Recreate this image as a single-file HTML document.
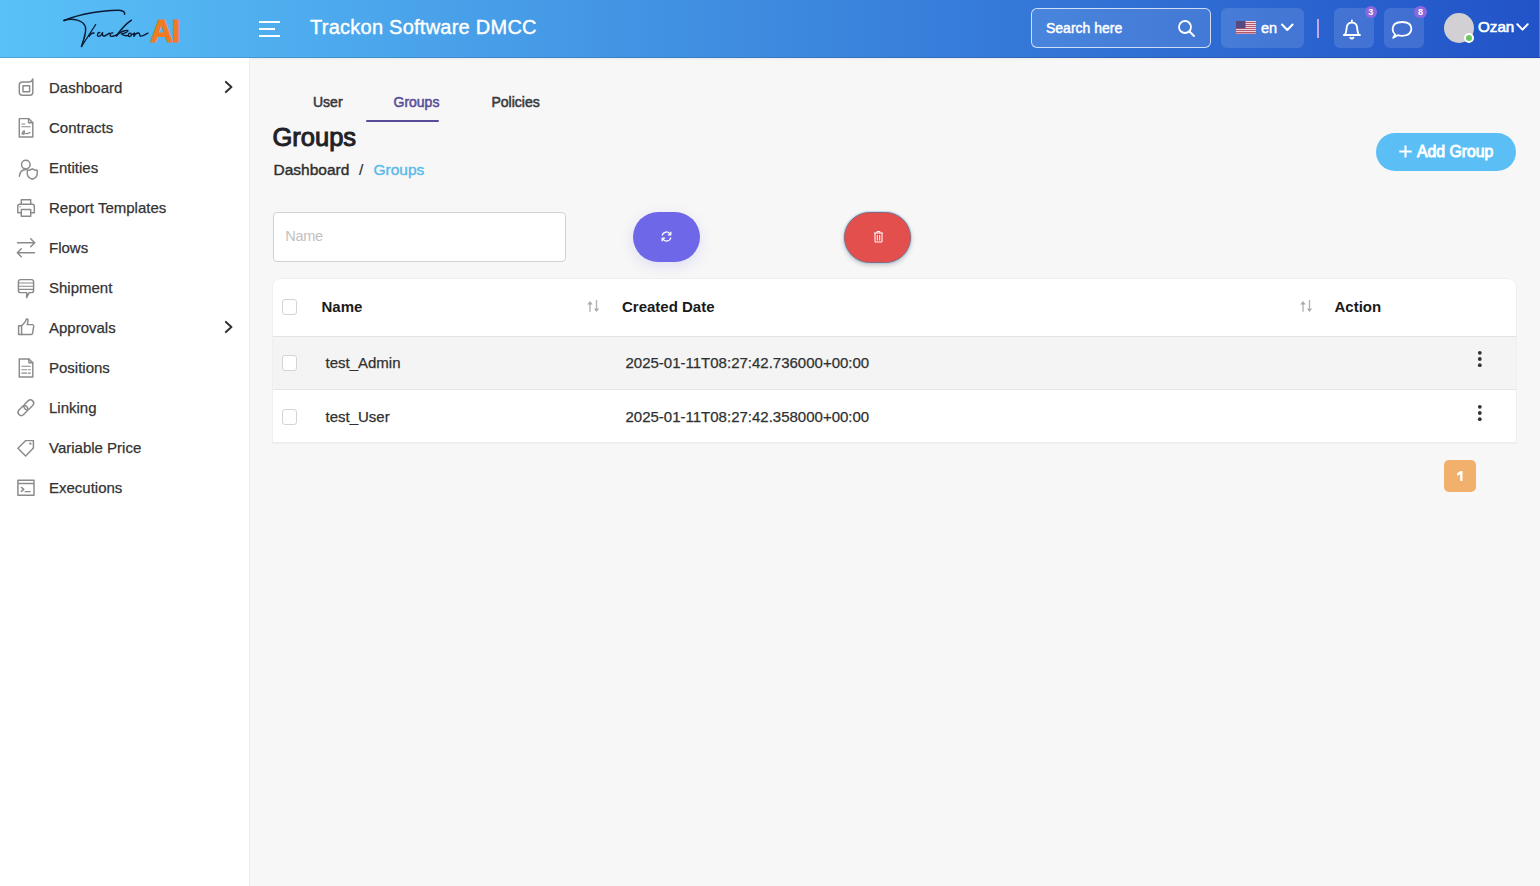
<!DOCTYPE html>
<html><head><meta charset="utf-8">
<style>
*{box-sizing:border-box;margin:0;padding:0}
html,body{width:1540px;height:886px;overflow:hidden}
body{background:#f7f7f7;font-family:"Liberation Sans",sans-serif;position:relative;color:#333}
.abs{position:absolute}
#hdr{left:0;top:0;width:1540px;height:58px;background:linear-gradient(90deg,#59c1f7 0%,#2253c8 100%);box-shadow:inset 0 -1px 0 rgba(0,0,0,.13), 0 1px 2px rgba(0,0,0,.06)}
#side{left:0;top:58px;width:250px;height:828px;background:#fff;border-right:1px solid #ededed}
.nav{position:absolute;left:0;width:249px;height:40px}
.nav .t{position:absolute;left:49px;top:0;font-size:15px;color:#333;line-height:40px;white-space:nowrap;-webkit-text-stroke:0.25px #333}
.nav svg.ic{position:absolute;left:17px;top:11px}
.nav svg.chev{position:absolute;left:222px;top:13px}
.txt{position:absolute;white-space:nowrap;line-height:1}
.cb{width:15.5px;height:15.5px;border:1px solid #d4d4d4;border-radius:3px;background:#fff}
.th{font-size:15px;font-weight:bold;color:#1a1a1a}
.td{font-size:15px;color:#303030;-webkit-text-stroke:0.25px #303030}
.badge{width:12.2px;height:12.2px;border-radius:50%;background:#8c68de;color:#fff;font-size:9px;font-weight:bold;line-height:12.2px;text-align:center}
</style></head>
<body>
<div id="hdr" class="abs">
  <!-- logo -->
  <svg class="abs" style="left:0;top:0" width="200" height="58" viewBox="0 0 200 58" fill="none" stroke="#0a1a33" stroke-linecap="round" stroke-linejoin="round">
    <path d="M64 20.5 C 80 14, 104 10, 119 10.3 C 123.5 10.6, 125 12.2, 124.6 14.3" stroke-width="1.5"/>
    <path d="M64 20.5 C 72 17.5, 84.5 20, 85.6 28 C 86.2 33, 84 39, 81.5 46.5" stroke-width="1.5"/>
    <path d="M81.5 46.5 L 95.7 24.5" stroke-width="1.3"/>
    <path d="M89 36.4 Q 91 32.6 94 33 M99.8 32.6 C 97.5 32.3, 96.4 36.4, 98.8 36.4 C 100.8 36.4, 102.2 33.4, 102.6 32.6 C 102.2 34.5, 102.4 36.4, 104.5 36 C 106 35.6, 107.5 34.2, 109.6 33.2 M112.8 32.9 C 110.5 32.4, 108.6 36.4, 111.5 36.4 C 113.2 36.4, 114.6 35.6, 116.6 35" stroke-width="1.4"/>
    <path d="M131.4 20.2 C 126 24, 119.5 31.5, 116.4 36" stroke-width="1.5"/>
    <path d="M117.2 34.8 C 120.5 31.5, 127.8 29.4, 128 30.8 C 127.6 32.4, 123 33.8, 121.4 34 C 123 35, 125.2 36.2, 127.6 35.6 M130.2 33.1 C 128.2 32.9, 127.4 36.5, 129.6 36.5 C 131.6 36.5, 132.2 33.4, 130.2 33.1 M131.8 34.6 C 133.2 34.2, 133.8 33.6, 134.4 33 L 133.8 36.4 C 135 34.2, 137.4 32.8, 139 33.2 C 140 33.6, 139.4 35.6, 140.2 36.1 C 142 36.5, 145 34.4, 148 33.2" stroke-width="1.4"/>
    <text x="150" y="42" font-family="Liberation Sans" font-weight="bold" font-size="32" fill="#f07b22" stroke="#f07b22" stroke-width="0.9" letter-spacing="-1.6">AI</text>
  </svg>
  <!-- hamburger -->
  <div class="abs" style="left:259px;top:21px;width:21px;height:2px;background:#fff"></div>
  <div class="abs" style="left:259px;top:28px;width:16px;height:2px;background:#fff"></div>
  <div class="abs" style="left:259px;top:35px;width:21px;height:2px;background:#fff"></div>
  <div class="txt" style="left:310px;top:17px;font-size:20px;letter-spacing:0.25px;color:#fff;-webkit-text-stroke:0.4px #fff">Trackon Software DMCC</div>
  <!-- search -->
  <div class="abs" style="left:1031px;top:8px;width:180px;height:40px;border:1px solid rgba(255,255,255,.75);border-radius:6px;background:rgba(255,255,255,.1)"></div>
  <div class="txt" style="left:1046px;top:21.3px;font-size:14px;color:#fff;-webkit-text-stroke:0.45px #fff">Search here</div>
  <svg class="abs" style="left:1177px;top:19px" width="19" height="19" viewBox="0 0 19 19"><circle cx="8" cy="8" r="6" fill="none" stroke="#fff" stroke-width="1.8"/><path d="M12.5 12.5 L17 17" stroke="#fff" stroke-width="2" stroke-linecap="round"/></svg>
  <!-- lang -->
  <div class="abs" style="left:1221px;top:8px;width:83px;height:40px;border-radius:6px;background:rgba(255,255,255,.12)"></div>
  <!-- divider -->
  <div class="abs" style="left:1317px;top:19px;width:2px;height:19px;background:#c4a6ea"></div>
  <!-- bell / chat boxes -->
  <div class="abs" style="left:1334px;top:8px;width:40px;height:40px;border-radius:6px;background:rgba(255,255,255,.12)"></div>
  <div class="abs" style="left:1384px;top:8px;width:40px;height:40px;border-radius:6px;background:rgba(255,255,255,.12)"></div>
  <!-- avatar -->
  <div class="abs" style="left:1444px;top:13px;width:30px;height:30px;border-radius:50%;background:#d2d0d2"></div>
  <div class="abs" style="left:1464px;top:33px;width:10px;height:10px;border-radius:50%;background:#6cc85a;border:2px solid #fff"></div>
  <div class="txt" style="left:1478px;top:18.6px;font-size:15.2px;color:#fff;-webkit-text-stroke:0.6px #fff">Ozan</div>
  <!-- flag -->
  <svg class="abs" style="left:1236px;top:21px" width="20" height="13" viewBox="0 0 20 13">
    <rect width="20" height="13" fill="#efd2dc"/>
    <g fill="#b25a6e"><rect y="1" width="20" height="1"/><rect y="3" width="20" height="1"/><rect y="5" width="20" height="1"/><rect y="7" width="20" height="1"/><rect y="9" width="20" height="1"/><rect y="11" width="20" height="1"/><rect y="12.5" width="20" height="0.5"/></g>
    <rect width="9.5" height="7.3" fill="#574a80"/>
  </svg>
  <div class="txt" style="left:1261px;top:21px;font-size:14.5px;color:#fff;-webkit-text-stroke:0.45px #fff">en</div>
  <svg class="abs" style="left:1279.6px;top:22px" width="15" height="11" viewBox="0 0 15 11"><path d="M2 2.5 L7.3 8 L12.6 2.5" fill="none" stroke="#fff" stroke-width="2" stroke-linecap="round" stroke-linejoin="round"/></svg>
  <!-- bell -->
  <svg class="abs" style="left:1340px;top:18px" width="24" height="24" viewBox="0 0 24 24" fill="none" stroke="#fff" stroke-width="1.8" stroke-linejoin="round">
    <path d="M11.9 2.3 L11.9 4.3" stroke-linecap="round"/>
    <path d="M5.2 16.4 Q6.4 14 6.7 9.6 Q7.1 4.6 11.9 4.6 Q16.7 4.6 17.1 9.6 Q17.4 14 18.6 16.4"/>
    <path d="M3.9 17 L19.9 17" stroke-width="2.1" stroke-linecap="round"/>
    <path d="M10.3 19.6 Q11.9 21.5 13.5 19.6" stroke-width="1.8" stroke-linecap="round"/>
  </svg>
  <!-- chat -->
  <svg class="abs" style="left:1389px;top:18px" width="26" height="24" viewBox="0 0 26 24" fill="none" stroke="#fff" stroke-width="1.8" stroke-linejoin="round">
    <path d="M6.2 16.6 Q3.5 14.2 3.6 11 Q3.8 4 13.2 4 Q22.4 4.2 22.4 10.8 Q22.2 17.6 13.2 17.8 Q10.6 17.8 8.8 17.2 L4.2 19.8 Z"/>
  </svg>
  <!-- badges -->
  <div class="abs badge" style="left:1364.6px;top:5.9px">3</div>
  <div class="abs badge" style="left:1414.4px;top:5.9px">8</div>
  <div class="abs" style="left:1539px;top:0;width:1px;height:57px;background:rgba(255,255,255,.22)"></div>
  <!-- ozan chevron -->
  <svg class="abs" style="left:1515px;top:21px" width="15" height="12" viewBox="0 0 15 12"><path d="M2.3 3.3 L7.5 8.6 L12.7 3.3" fill="none" stroke="#fff" stroke-width="2" stroke-linecap="round" stroke-linejoin="round"/></svg>
</div>


<div id="side" class="abs"></div>
<svg class="abs" style="left:0;top:0" width="249" height="520" viewBox="0 0 249 520" fill="none" stroke="#8a8a8a" stroke-width="1.45" stroke-linejoin="round" stroke-linecap="round">
  <!-- dashboard -->
  <path d="M32.8 79 L32.8 92.2 Q32.8 95.2 29.8 95.2 L22.3 95.2 Q19.3 95.2 19.3 92.2 L19.3 85 Q19.3 82 22.3 82 L29.5 82 Q32 81.5 32.8 79 Z"/>
  <path d="M23 85.8 L29.6 85.8 L29.6 91.8 L23 91.8 Z"/>
  <!-- contracts -->
  <path d="M19.3 118.6 L28.6 118.6 L32.8 122.8 L32.8 137 L19.3 137 Z"/>
  <path d="M28.6 118.6 L28.6 122.8 L32.8 122.8" />
  <path d="M21.8 124 L24.8 124 M21.8 126.8 L30.2 126.8" stroke-width="1.1"/>
  <path d="M22 134 C23 131, 24.5 130, 24.5 131.5 C24.5 133, 22.5 134, 23.5 134.3 C25 134.3, 25.5 132.5, 26.5 133.5 C27.5 134.3, 28.5 132.2, 30 132.6" stroke-width="1.2"/>
  <!-- entities -->
  <circle cx="25.8" cy="164.6" r="4.3"/>
  <path d="M19.4 176.2 C19.8 171.5, 22.5 169.4, 26.2 169.4"/>
  <path d="M27.3 170.3 Q30 170.3 32.3 168.8 Q34.6 170.3 37.2 170.3 L37.2 173.8 Q37.2 177.5 32.3 179.3 Q27.3 177.5 27.3 173.8 Z"/>
  <!-- printer -->
  <path d="M21.3 204.3 L21.3 199.8 L30.7 199.8 L30.7 204.3"/>
  <path d="M21.3 212.8 L17.8 212.8 L17.8 206.3 Q17.8 204.3 19.8 204.3 L32.3 204.3 Q34.3 204.3 34.3 206.3 L34.3 212.8 L30.7 212.8"/>
  <path d="M21.3 209.5 L30.7 209.5 L30.7 216.2 L21.3 216.2 Z"/>
  <path d="M19.8 206.8 L20.4 206.8" stroke-width="1"/>
  <!-- flows -->
  <path d="M17.5 242.8 L34.5 242.8 M30.7 238.8 L34.7 242.8 L30.7 246.8"/>
  <path d="M17.5 252.8 L34.5 252.8 M21.3 248.8 L17.3 252.8 L21.3 256.8"/>
  <!-- shipment -->
  <path d="M20.6 279.6 L31.4 279.6 Q33.6 279.6 33.6 281.8 L33.6 290.4 Q33.6 292.6 31.4 292.6 L29.2 292.6 L26.6 297.6 L26.8 292.6 L20.6 292.6 Q18.4 292.6 18.4 290.4 L18.4 281.8 Q18.4 279.6 20.6 279.6 Z"/>
  <path d="M18.6 283 L33.4 283 M18.6 286.2 L33.4 286.2 M18.6 289.4 L33.4 289.4" stroke-width="1.1"/>
  <!-- approvals -->
  <path d="M18.6 325.8 L21.6 325.8 L21.6 334.4 L18.6 334.4 Z"/>
  <path d="M21.6 325.8 L24.6 322.6 Q26 320.8 26.3 319.2 Q27.5 318.6 28 319.6 Q28.2 322 27.2 324.6 L32.6 324.6 Q33.9 324.9 33.7 326.4 L32.6 333.2 Q32.3 334.4 31.2 334.4 L21.6 334.4"/>
  <!-- positions -->
  <path d="M19.3 358.9 L28.9 358.9 L32.8 362.8 L32.8 377 L19.3 377 Z"/>
  <path d="M28.9 358.9 L28.9 362.8 L32.8 362.8"/>
  <path d="M21.8 366.3 L30.3 366.3 M21.8 369.8 L26.6 369.8 M28.2 369.8 L30.3 369.8 M21.8 373.1 L26.6 373.1 M28.2 373.1 L30.3 373.1" stroke-width="1.1"/>
  <!-- linking -->
  <g transform="rotate(-45 25.85 407.7)">
    <rect x="16.2" y="404.45" width="11" height="6.5" rx="3.25"/>
    <rect x="24.5" y="404.45" width="11" height="6.5" rx="3.25"/>
  </g>
  <!-- tag -->
  <path d="M33.4 440.6 L33.4 448 L25.6 456 L17.9 448.3 L25.7 440.6 Z"/>
  <circle cx="30.4" cy="443.6" r="0.5" fill="#8a8a8a"/>
  <!-- executions -->
  <path d="M17.9 480.2 L34 480.2 L34 495.2 L17.9 495.2 Z M17.9 483.4 L34 483.4"/>
  <path d="M21.4 487.4 L23.8 489.4 L21.4 491.4 M25.2 491.6 L30.2 491.6"/>
  <!-- chevrons -->
  <path d="M225.9 81.9 L231.4 87 L225.9 92.1 M225.9 321.9 L231.4 327 L225.9 332.1" stroke="#333" stroke-width="2"/>
</svg>
<div class="nav" style="top:68px"><span class="t">Dashboard</span></div>
<div class="nav" style="top:108px"><span class="t">Contracts</span></div>
<div class="nav" style="top:148px"><span class="t">Entities</span></div>
<div class="nav" style="top:188px"><span class="t">Report Templates</span></div>
<div class="nav" style="top:228px"><span class="t">Flows</span></div>
<div class="nav" style="top:268px"><span class="t">Shipment</span></div>
<div class="nav" style="top:308px"><span class="t">Approvals</span></div>
<div class="nav" style="top:348px"><span class="t">Positions</span></div>
<div class="nav" style="top:388px"><span class="t">Linking</span></div>
<div class="nav" style="top:428px"><span class="t">Variable Price</span></div>
<div class="nav" style="top:468px"><span class="t">Executions</span></div>



<!-- content -->
<div class="txt" style="left:313px;top:95px;font-size:14px;color:#3a3a3a;-webkit-text-stroke:0.55px #3a3a3a">User</div>
<div class="txt" style="left:393.5px;top:95px;font-size:14px;color:#5b4f9a;-webkit-text-stroke:0.55px #5b4f9a">Groups</div>
<div class="txt" style="left:491.5px;top:95px;font-size:14px;color:#3a3a3a;-webkit-text-stroke:0.55px #3a3a3a">Policies</div>
<div class="abs" style="left:366px;top:120px;width:73px;height:2px;background:#574c98;border-radius:1px"></div>
<div class="txt" style="left:272.5px;top:125.3px;font-size:25.5px;color:#1f2226;-webkit-text-stroke:1px #1f2226">Groups</div>
<div class="txt" style="left:273.5px;top:161.5px;font-size:15.5px;color:#2f2f2f;-webkit-text-stroke:0.4px #2f2f2f">Dashboard</div>
<div class="txt" style="left:359px;top:161.5px;font-size:15.5px;color:#2f2f2f;-webkit-text-stroke:0.2px #2f2f2f">/</div>
<div class="txt" style="left:373.5px;top:161.5px;font-size:15.5px;color:#5bb9ea;-webkit-text-stroke:0.4px #5bb9ea">Groups</div>
<!-- add group -->
<div class="abs" style="left:1376px;top:133px;width:140px;height:38px;border-radius:19px;background:#5bbff6"></div>
<svg class="abs" style="left:1398px;top:144px" width="15" height="15" viewBox="0 0 15 15"><path d="M7.5 1.6 V13.4 M1.3 7.5 H13.7" stroke="#fff" stroke-width="2.1"/></svg>
<div class="txt" style="left:1417px;top:143.7px;font-size:15.8px;color:#fff;-webkit-text-stroke:0.85px #fff">Add Group</div>
<!-- filter input -->
<div class="abs" style="left:273px;top:212px;width:293px;height:50px;background:#fff;border:1px solid #d2d2d2;border-radius:4px"></div>
<div class="txt" style="left:285.2px;top:228.7px;font-size:14.6px;letter-spacing:-0.35px;color:#c2c2c2">Name</div>
<!-- refresh btn -->
<div class="abs" style="left:633px;top:212px;width:67px;height:50px;border-radius:25px;background:#6e67e8;box-shadow:0 4px 14px rgba(110,103,232,.18)"></div>
<svg class="abs" style="left:660px;top:230px" width="13" height="13" viewBox="0 0 13 13" fill="none" stroke="#fff" stroke-width="1.3"><path d="M2.2 5.5 A4.3 4.3 0 0 1 10.2 4.2"/><path d="M10.8 1.8 L10.8 4.8 L7.8 4.8" stroke-linejoin="round"/><path d="M10.8 7.5 A4.3 4.3 0 0 1 2.8 8.8"/><path d="M2.2 11.2 L2.2 8.2 L5.2 8.2" stroke-linejoin="round"/></svg>
<!-- delete btn -->
<div class="abs" style="left:844px;top:212px;width:67px;height:51px;border-radius:25.5px;background:#e24f4d;border:1.5px solid #8f6677;box-shadow:0 0 0 1px rgba(150,205,240,.55),0 2px 5px rgba(0,0,0,.22)"></div>
<svg class="abs" style="left:873px;top:230px" width="11" height="13" viewBox="0 0 11 13" fill="none" stroke="#fff" stroke-width="1"><path d="M1 3 H10"/><path d="M4 3 V1.5 H7 V3"/><path d="M2 3 V12 H9 V3"/><path d="M4.3 5 V10.5 M6.7 5 V10.5"/></svg>
<!-- table -->
<div class="abs" style="left:273px;top:278.5px;width:1243px;height:164.5px;background:#fff;border-radius:8px 8px 0 0;box-shadow:0 0 0 1px #efefef"></div>
<div class="abs" style="left:273px;top:336px;width:1243px;height:54px;background:#f4f4f4;border-top:1px solid #e3e3e3;border-bottom:1px solid #e6e6e6"></div>
<div class="abs" style="left:273px;top:442px;width:1243px;height:1px;background:#ececec"></div>
<div class="abs cb" style="left:281.5px;top:299px"></div>
<div class="abs cb" style="left:281.5px;top:355px"></div>
<div class="abs cb" style="left:281.5px;top:409px"></div>
<div class="txt th" style="left:321.5px;top:298.9px">Name</div>
<div class="txt th" style="left:622px;top:298.9px">Created Date</div>
<div class="txt th" style="left:1334.5px;top:298.9px">Action</div>
<svg class="abs" style="left:586px;top:299px" width="14" height="14" viewBox="0 0 14 14"><path d="M4 4.5 V12.8" stroke="#b8b8b8" stroke-width="1.5"/><path d="M1.3 5.6 L4 2 L6.7 5.6 Z" fill="#aaa"/><path d="M10.5 1 V9.5" stroke="#b0b0b0" stroke-width="1.3"/><path d="M8 9.6 L10.5 12.9 L13 9.6 Z" fill="#a5a5a5"/></svg>
<svg class="abs" style="left:1298.5px;top:299px" width="14" height="14" viewBox="0 0 14 14"><path d="M4 4.5 V12.8" stroke="#b8b8b8" stroke-width="1.5"/><path d="M1.3 5.6 L4 2 L6.7 5.6 Z" fill="#aaa"/><path d="M10.5 1 V9.5" stroke="#b0b0b0" stroke-width="1.3"/><path d="M8 9.6 L10.5 12.9 L13 9.6 Z" fill="#a5a5a5"/></svg>
<div class="txt td" style="left:325.5px;top:355.2px">test_Admin</div>
<div class="txt td" style="left:625.5px;top:355.2px">2025-01-11T08:27:42.736000+00:00</div>
<div class="txt td" style="left:325.5px;top:409.4px">test_User</div>
<div class="txt td" style="left:625.5px;top:409.4px">2025-01-11T08:27:42.358000+00:00</div>
<svg class="abs" style="left:1476px;top:350px" width="8" height="72" viewBox="0 0 8 72" fill="#333"><circle cx="3.8" cy="2.8" r="1.9"/><circle cx="3.8" cy="9" r="1.9"/><circle cx="3.8" cy="15.2" r="1.9"/><circle cx="3.8" cy="56.8" r="1.9"/><circle cx="3.8" cy="63" r="1.9"/><circle cx="3.8" cy="69.2" r="1.9"/></svg>
<!-- pagination -->
<div class="abs" style="left:1444px;top:460px;width:32px;height:32px;border-radius:5px;background:#f1b16c"></div>
<svg class="abs" style="left:0;top:0;overflow:visible" width="1" height="1"><path d="M1456.9 473.6 L1460.4 471.1 L1462.5 471.1 L1462.5 480.9 L1460.2 480.9 L1460.2 474.2 L1457.6 475.9 Z" fill="#fff"/></svg>
</body></html>
